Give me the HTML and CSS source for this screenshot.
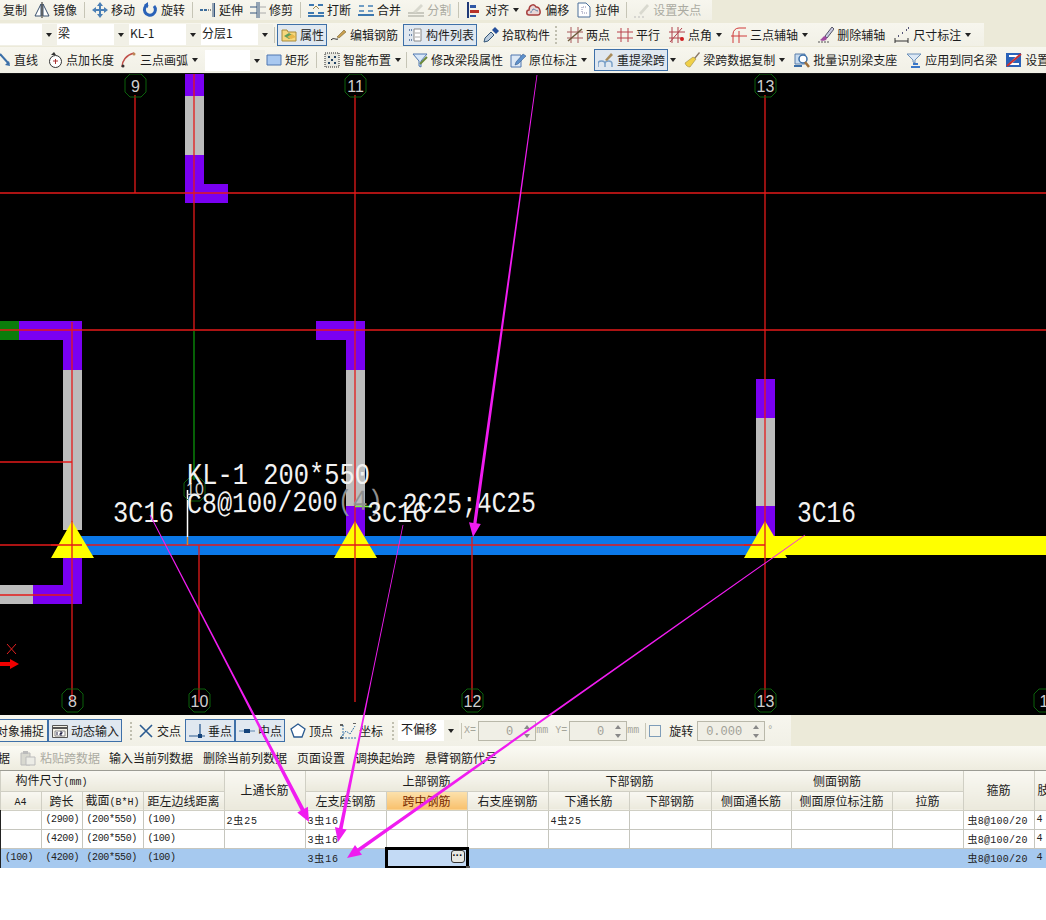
FILE: index.html
```html
<!DOCTYPE html>
<html lang="zh">
<head>
<meta charset="utf-8">
<title>梁 KL-1</title>
<link rel="stylesheet" href="styles.css">
</head>
<body>
<svg class="defs" aria-hidden="true">
<symbol id="mirror" viewBox="0 0 16 16"><path d="M7 2 1 14h6zM9 2l6 12H9z" fill="#fff" stroke="#39506e"/><path d="M8 0v16" stroke="#222"/></symbol>
<symbol id="move" viewBox="0 0 16 16"><path d="M8 0 5 4h2v3H4V5L0 8l4 3V9h3v3H5l3 4 3-4H9V9h3v2l4-3-4-3v2H9V4h2z" fill="#4a7fb5"/></symbol>
<symbol id="rotate" viewBox="0 0 16 16"><path d="M12 4a5.500 5.500 0 1 1-6-1.500" fill="none" stroke="#2a62b8" stroke-width="3"/><path d="M6 0v6l-4-3z" fill="#2a62b8"/></symbol>
<symbol id="extend" viewBox="0 0 16 16"><path d="M13 1v14M14.500 1v14" stroke="#35557d"/><path d="M0 8h3M4 8h3" stroke="#3d6d9c" stroke-width="2"/><path d="M8 8h4" stroke="#888" stroke-dasharray="1 1" stroke-width="2"/></symbol>
<symbol id="trim" viewBox="0 0 16 16"><path d="M7 0v16M9 0v16" stroke="#35557d"/><path d="M0 5h7M0 11h7" stroke="#35557d"/><path d="M10 5h6M10 11h6" stroke="#aaa"/></symbol>
<symbol id="break" viewBox="0 0 16 16"><path d="M0 11h6M10 11h6M0 14h16" stroke="#3d78b0" stroke-width="2"/><path d="M1 3h5M10 3h5" stroke="#3d78b0" stroke-width="2"/><path d="M5 7 8 4l3 3" stroke="#a08a50" fill="none"/></symbol>
<symbol id="merge" viewBox="0 0 16 16"><path d="M0 13h16" stroke="#3d78b0" stroke-width="2"/><path d="M1 4h5M10 4h5M1 9h5M10 9h5" stroke="#6f9cc4" stroke-width="2"/></symbol>
<symbol id="split" viewBox="0 0 16 16"><path d="M0 14h16M0 11h16" stroke="#c9c9bf" stroke-width="2"/><path d="m5 10 8-8 2 2-7 7z" fill="#d8d8ce"/></symbol>
<symbol id="align" viewBox="0 0 16 16"><path d="M2 0v16" stroke="#203a78" stroke-width="2"/><path d="M4 3h6v3H4z" fill="#2f57a5"/><path d="M4 8h9v3H4z" fill="#b8322a"/><path d="M4 13h6v2H4z" fill="#2f57a5"/></symbol>
<symbol id="offset" viewBox="0 0 16 16"><path d="M3 13C0 13 0 8 3 8 3 3 8 1 10 5c4-1 6 8 2 8z" fill="#e8d8d8" stroke="#a8403f" stroke-width="1.500"/><path d="M5 11c-1-2 2-2 2-4 2 0 3 2 5 2" stroke="#5a7fa8" fill="none"/></symbol>
<symbol id="stretch" viewBox="0 0 16 16"><path d="M2 1h8l4 4v10H2z" fill="#fff" stroke="#4a6f99"/><path d="M10 5h-4v6h5" stroke="#88a" stroke-dasharray="1 1" fill="none"/></symbol>
<symbol id="grip" viewBox="0 0 16 16"><path d="m5 11 8-9 2 2-8 9z" fill="#d9d9cf"/><path d="M0 15h2M4 15h2M8 15h2" stroke="#bbb"/></symbol>
<symbol id="prop" viewBox="0 0 16 16"><path d="M1 3h5l1 2h8v9H1z" fill="#f5d77e" stroke="#a88a3a"/><path d="m3 9 5-3 5 3-5 3z" fill="#5f9e5a"/><path d="m6 10 5-3 4 3-5 2z" fill="#e8b84a"/></symbol>
<symbol id="edit" viewBox="0 0 16 16"><path d="M0 13c3-3 4 0 7-1" stroke="#222" fill="none"/><path d="m6 10 7-7 2 2-7 6z" fill="#c8a050" stroke="#6b5320" stroke-width=".5"/></symbol>
<symbol id="list" viewBox="0 0 16 16"><path d="M2 3h3M2 8h3M2 13h3" stroke="#6b86ad" stroke-width="2" stroke-dasharray="1 1"/><path d="M7 2h7v12H7z" fill="#fff" stroke="#888"/><path d="M8 6h5M8 10h5" stroke="#aaa"/></symbol>
<symbol id="pick" viewBox="0 0 16 16"><path d="M1 15 2 11l6-6 3 3-6 6z" fill="#bcd" stroke="#357"/><path d="m9 3 3-3 4 4-3 3z" fill="#26509c"/></symbol>
<symbol id="twopt" viewBox="0 0 16 16"><path d="M4 0v16M11 0v16M0 5h16M0 11h16" stroke="#a8595a"/><path d="M1 14 15 2" stroke="#6c5a3c" stroke-width="1.500"/></symbol>
<symbol id="par" viewBox="0 0 16 16"><path d="M4 1v14M11 1v14M0 5h16M0 11h16" stroke="#b8404a"/></symbol>
<symbol id="angle" viewBox="0 0 16 16"><path d="M3 0v16M9 0v16M0 5h16M0 11h14M1 15 13 1" stroke="#b0404a"/><circle cx="13" cy="12" r="2" fill="#d02020"/></symbol>
<symbol id="arc3" viewBox="0 0 16 16"><path d="M2 16V7a6 6 0 0 1 6-6h7M0 9h16M8 4v12" stroke="#d03a3a" fill="none"/></symbol>
<symbol id="del" viewBox="0 0 16 16"><path d="m7 9 7-9 2 2-7 9z" fill="#c9c9e0" stroke="#556"/><path d="M2 13c2-1 3-4 5-4l2 2c0 2-3 4-7 2z" fill="#a04aa0"/><path d="M0 15h11" stroke="#555" stroke-dasharray="2 1"/></symbol>
<symbol id="dim" viewBox="0 0 16 16"><path d="M1 11v5M14 11v5M1 14h13" stroke="#333"/><path d="M4 9h1M8 6h1M12 3h1M14 1h1" stroke="#557" stroke-width="2"/></symbol>
<symbol id="line" viewBox="0 0 16 16"><path d="m5 2 9 10" stroke="#3b6fa8" stroke-width="2"/><path d="m15 14-5-1 4-4z" fill="#3b6fa8"/></symbol>
<symbol id="plus" viewBox="0 0 16 16"><circle cx="8.500" cy="9.500" r="6" fill="#fff" stroke="#333"/><path d="M6 9h5M8.500 7v5" stroke="#a33"/><path d="m4 3 3-3 2 3z" fill="#333"/></symbol>
<symbol id="arc" viewBox="0 0 16 16"><path d="M1 15C1 9 5 3 13 1" stroke="#c0504a" stroke-width="1.500" fill="none"/><circle cx="2" cy="14" r="1.500" fill="#333"/><circle cx="13" cy="2" r="1.500" fill="#b85"/></symbol>
<symbol id="rect" viewBox="0 0 16 16"><path d="M1 3h14v10H1z" fill="#a8c8f0" stroke="#4f77b0"/></symbol>
<symbol id="smart" viewBox="0 0 16 16"><path d="M1 1h14v14H1z" fill="#e8e8e0" stroke="#222" stroke-dasharray="1 1"/><path d="M4 4h2v2H4zM10 4h2v2h-2zM7 7h2v2H7zM4 10h2v2H4zM10 10h2v2h-2z" fill="#246"/></symbol>
<symbol id="funnel" viewBox="0 0 16 16"><path d="M1 2h14L9 9v6l-2-1V9z" fill="#d8e8f8" stroke="#4f77b0"/><path d="m8 12 7-7" stroke="#6b8a3a" stroke-width="2"/></symbol>
<symbol id="orig" viewBox="0 0 16 16"><path d="M1 3h10v12H1z" fill="#dce8f5" stroke="#4f77b0"/><path d="m6 10 7-8 3 2-8 8-3 1z" fill="#5f92cc" stroke="#2a4f80" stroke-width=".5"/></symbol>
<symbol id="refetch" viewBox="0 0 16 16"><path d="M0 15v-3c0-4 7-4 7 0v3M7 15v-3c0-4 7-4 7 0v3" stroke="#7aa0c8" fill="none" stroke-width="1.500"/><path d="m7 8 6-7 2 2-6 6z" fill="#a98c5a"/></symbol>
<symbol id="brush" viewBox="0 0 16 16"><path d="M10 6 15 0l1 1-5 6z" fill="#876"/><path d="M9 5 1 11c1 3 3 4 5 4l6-8z" fill="#f0d048" stroke="#8a7a3a" stroke-width=".5"/></symbol>
<symbol id="batch" viewBox="0 0 16 16"><path d="M1 2h10v10H1z" fill="#c8dcf0" stroke="#5b7faa"/><circle cx="9" cy="7" r="4" fill="#fff" stroke="#3b6fa8" stroke-width="1.500"/><path d="m11 10 4 5" stroke="#a0703a" stroke-width="2.500"/><path d="M0 14h8" stroke="#3b6fa8" stroke-width="2"/></symbol>
<symbol id="apply" viewBox="0 0 16 16"><path d="M1 2h14L9 8v3L7 10V8z" fill="#dce8f5" stroke="#6a8fb8"/><path d="M7 11h5v2h-5zM5 14h9v2H5z" fill="#3a77c8"/></symbol>
<symbol id="setz" viewBox="0 0 16 16"><path d="M0 1h15v14H0z" fill="#2a62b8"/><path d="M3 4h9L4 12h9" stroke="#fff" fill="none" stroke-width="2"/><path d="m1 14 14-12" stroke="#c83030" stroke-width="2"/></symbol>
<symbol id="dyn" viewBox="0 0 16 16"><path d="M.500 2.500h15v12H.500z" fill="#f4f2e8" stroke="#555"/><path d="M1 5h14" stroke="#555" stroke-width="2"/><path d="M3 8h10v5H3z" fill="#fff" stroke="#888"/><path d="M5 9v3M8 9h2v1.500H8V12h2" stroke="#224" fill="none"/></symbol>
<symbol id="cross" viewBox="0 0 16 16"><path d="m2 2 12 12M14 2 2 14" stroke="#2a5a90" stroke-width="1.600"/></symbol>
<symbol id="perp" viewBox="0 0 16 16"><path d="M0 13h16" stroke="#2a5a90"/><path d="M11 1v12" stroke="#2a5a90" stroke-width="1.300"/><path d="M9 11h4v4H9z" fill="#14437a"/></symbol>
<symbol id="mid" viewBox="0 0 16 16"><path d="M0 8h16" stroke="#5a86b0"/><path d="M5 6h6v4H5z" fill="#14437a"/></symbol>
<symbol id="top" viewBox="0 0 16 16"><path d="m8 1 7 5-3 8H4L1 6z" fill="#fff" stroke="#2a5a90" stroke-width="1.300"/></symbol>
<symbol id="coord" viewBox="0 0 16 16"><path d="M1 14 6 8l4 3 5-8M3 2v13h13" stroke="#3a76ac" stroke-dasharray="2 1" fill="none"/><path d="M0 2h3M13 0h3M0 15h3" stroke="#333" stroke-width="1.500"/></symbol>
<symbol id="paste" viewBox="0 0 16 16"><path d="M1 3h9v12H1z" fill="#d8d8d0" stroke="#bbb"/><path d="M6 7h9v8H6z" fill="#ecece6" stroke="#bbb"/><path d="M3 1h5v3H3z" fill="#bbb"/></symbol>
</svg>

<div class="row r1"><div class="bar">
<span class="it">复制</span>
<span class="it"><svg class="ic"><use href="#mirror"/></svg>镜像</span><i class="sep"></i>
<span class="it"><svg class="ic"><use href="#move"/></svg>移动</span>
<span class="it"><svg class="ic"><use href="#rotate"/></svg>旋转</span><i class="sep"></i>
<span class="it"><svg class="ic"><use href="#extend"/></svg>延伸</span>
<span class="it"><svg class="ic"><use href="#trim"/></svg>修剪</span><i class="sep"></i>
<span class="it"><svg class="ic"><use href="#break"/></svg>打断</span>
<span class="it"><svg class="ic"><use href="#merge"/></svg>合并</span>
<span class="it off"><svg class="ic"><use href="#split"/></svg>分割</span><i class="sep"></i>
<span class="it"><svg class="ic"><use href="#align"/></svg>对齐<b class="dr"></b></span>
<span class="it"><svg class="ic"><use href="#offset"/></svg>偏移</span>
<span class="it"><svg class="ic"><use href="#stretch"/></svg>拉伸</span><i class="sep"></i>
<span class="it off"><svg class="ic"><use href="#grip"/></svg>设置夹点</span>
</div></div>

<div class="row r2"><div class="bar">
<span class="combo"><span class="val"></span><span class="arr"></span></span>
<span class="combo"><span class="val">梁</span><span class="arr"></span></span>
<span class="combo"><span class="val">KL-1</span><span class="arr"></span></span>
<span class="combo"><span class="val">分层1</span><span class="arr"></span></span>
<i class="sep s2"></i>
<span class="it btn"><svg class="ic"><use href="#prop"/></svg>属性</span>
<span class="it m5"><svg class="ic"><use href="#edit"/></svg>编辑钢筋</span>
<span class="it btn m6"><svg class="ic"><use href="#list"/></svg>构件列表</span>
<span class="it m5"><svg class="ic"><use href="#pick"/></svg>拾取构件</span>
<i class="grip"></i>
<span class="it"><svg class="ic"><use href="#twopt"/></svg>两点</span>
<span class="it m9"><svg class="ic"><use href="#par"/></svg>平行</span>
<span class="it m9"><svg class="ic"><use href="#angle"/></svg>点角<b class="dr"></b></span>
<span class="it m10"><svg class="ic"><use href="#arc3"/></svg>三点辅轴<b class="dr"></b></span>
<span class="it m9"><svg class="ic"><use href="#del"/></svg>删除辅轴</span>
<span class="it"><svg class="ic"><use href="#dim"/></svg>尺寸标注<b class="dr"></b></span>
</div></div>

<div class="row r3"><div class="bar">
<span class="it clip m9"><svg class="ic"><use href="#line"/></svg>直线</span>
<span class="it"><svg class="ic"><use href="#plus"/></svg>点加长度</span>
<span class="it"><svg class="ic"><use href="#arc"/></svg>三点画弧<b class="dr"></b></span>
<span class="combo small"><span class="val"></span><span class="arr"></span></span>
<span class="it"><svg class="ic"><use href="#rect"/></svg>矩形</span><i class="sep"></i>
<span class="it m5"><svg class="ic"><use href="#smart"/></svg>智能布置<b class="dr"></b></span><i class="sep m5r"></i>
<span class="it"><svg class="ic"><use href="#funnel"/></svg>修改梁段属性</span>
<span class="it"><svg class="ic"><use href="#orig"/></svg>原位标注<b class="dr"></b></span>
<span class="it btn wide m2"><svg class="ic"><use href="#refetch"/></svg>重提梁跨</span><b class="dr lone"></b>
<span class="it m9"><svg class="ic"><use href="#brush"/></svg>梁跨数据复制<b class="dr"></b></span>
<span class="it m9"><svg class="ic"><use href="#batch"/></svg>批量识别梁支座</span>
<span class="it m9"><svg class="ic"><use href="#apply"/></svg>应用到同名梁</span>
<span class="it"><svg class="ic"><use href="#setz"/></svg>设置</span>
</div></div>

<svg class="canvas" viewBox="0 74 1046 641">
  <g class="purple">
    <rect x="185" y="74" width="19" height="22"/><rect x="185" y="155" width="19" height="48"/><rect x="204" y="184" width="24" height="19"/>
    <rect x="19" y="321" width="63" height="19"/><rect x="63" y="340" width="19" height="30"/>
    <rect x="63" y="555" width="19" height="49"/><rect x="33" y="585" width="30" height="19"/>
    <rect x="316" y="321" width="49" height="19"/><rect x="346" y="340" width="19" height="30"/><rect x="346" y="506" width="19" height="34"/>
    <rect x="756" y="379" width="19" height="39"/><rect x="756" y="506" width="19" height="34"/>
  </g>
  <g class="gray">
    <rect x="185" y="96" width="19" height="59"/><rect x="63" y="370" width="19" height="160"/><rect x="0" y="585" width="33" height="19"/>
    <rect x="346" y="370" width="19" height="136"/><rect x="756" y="418" width="19" height="88"/>
  </g>
  <rect class="green" x="0" y="321" width="19" height="19"/>
  <rect class="blue" x="72" y="536" width="690" height="19"/>
  <rect class="yellow" x="770" y="536" width="276" height="19"/>
  <g class="red">
    <path d="M0 193H1046M0 330H1046M0 545H765M0 462H72M0 595H72"/>
    <path d="M135 95V193M194 74V330M355 95V702M765 95V702M72 322V702M199 545V702M472 537V702"/>
  </g>
  <path class="gline" d="M194 331V480"/>
  <path class="wline" d="M187.500 490V537"/>
  <path class="oline" d="M187.500 537V545" />
  <path class="yellow" d="M72 521 51 558H94zM355 521 334 558H377zM765 521 744 558H787z"/>
  <path class="red" d="M355 521V558M765 521V558M72 521V558M51 545H82M334 545H377M744 545H765"/>
  <path class="lime" d="M355 506.500H372"/>
  <g class="axes">
    <path id="ax" d="M130 74h11l5 5v13l-5 5h-11l-5-5V79z"/>
    <use href="#ax" x="220"/><use href="#ax" x="630"/>
    <use href="#ax" x="-63" y="615"/><use href="#ax" x="64" y="615"/><use href="#ax" x="337" y="615"/><use href="#ax" x="630" y="615"/><use href="#ax" x="909" y="615"/>
    <use href="#ax" x="59" y="404"/>
  </g>
  <g class="axlbl">
    <text x="135.500" y="92">9</text><text x="355.500" y="92">11</text><text x="765.500" y="92">13</text>
    <text x="72.500" y="707">8</text><text x="199.500" y="707">10</text><text x="472.500" y="707">12</text><text x="765.500" y="707">13</text><text x="1044" y="707">1</text>
    <text x="195" y="495">10</text>
  </g>
  <text class="anno" x="187" y="484" textLength="183" lengthAdjust="spacingAndGlyphs">KL-1 200*550</text>
  <text class="anno" x="187" y="513" textLength="196" lengthAdjust="spacingAndGlyphs" transform="rotate(-1 187 513)">C8@100/200<tspan class="dim">(4)</tspan></text>
  <text class="anno" x="113" y="522" textLength="61" lengthAdjust="spacingAndGlyphs">3C16</text>
  <text class="anno" x="367" y="522" textLength="60" lengthAdjust="spacingAndGlyphs">3C16</text>
  <text class="anno" x="403" y="513" textLength="133" lengthAdjust="spacingAndGlyphs" transform="rotate(-0.600 403 513)">2C25;4C25</text>
  <text class="anno" x="797" y="522" textLength="59" lengthAdjust="spacingAndGlyphs">3C16</text>
  <path class="redx" d="M7 644 16 654M16 644 7 654"/>
  <path class="redfill" d="M0 662h10v-3l9 5-9 5v-3H0z"/>
</svg>

<div class="row snap"><div class="bar">
<span class="it btn lead">对象捕捉</span>
<span class="it btn join m4"><svg class="ic"><use href="#dyn"/></svg>动态输入</span>
<i class="grip g1"></i>
<span class="it m4"><svg class="ic"><use href="#cross"/></svg>交点</span>
<span class="it btn m0"><svg class="ic"><use href="#perp"/></svg>垂点</span>
<span class="it btn m5"><svg class="ic"><use href="#mid"/></svg>中点</span>
<span class="it"><svg class="ic"><use href="#top"/></svg>顶点</span>
<span class="it"><svg class="ic"><use href="#coord"/></svg>坐标</span>
<i class="grip g2"></i>
<span class="combo shift"><span class="val">不偏移</span><span class="arr"></span></span>
<i class="sep s3"></i>
<span class="lbl">X=</span><span class="num w58">0<i class="spin"></i></span><span class="lbl">mm</span>
<span class="lbl y">Y=</span><span class="num w58">0<i class="spin"></i></span><span class="lbl">mm</span>
<i class="sep s4"></i><i class="check"></i>
<span class="rot">旋转</span><span class="num w68">0.000<i class="spin"></i></span><span class="lbl deg">°</span>
</div></div>

<div class="row cmds">
<span class="cmd lead2">据</span>
<span class="cmd off tight"><svg class="ic"><use href="#paste"/></svg>粘贴跨数据</span>
<span class="cmd">输入当前列数据</span>
<span class="cmd">删除当前列数据</span>
<span class="cmd">页面设置</span>
<span class="cmd">调换起始跨</span>
<span class="cmd">悬臂钢筋代号</span>
</div>

<div class="tablewrap">
<table class="grid">
<colgroup>
<col class="c41"><col class="c41"><col class="c61"><col class="c81"><col class="c81"><col class="c81"><col class="c81"><col class="c81"><col class="c81"><col class="c82"><col class="c80"><col class="c101"><col class="c71"><col class="c71"><col class="c41">
</colgroup>
<thead>
<tr class="h1"><th colspan="4" class="lt">构件尺寸<small>(mm)</small></th><th rowspan="2">上通长筋</th><th colspan="3">上部钢筋</th><th colspan="2">下部钢筋</th><th colspan="3">侧面钢筋</th><th rowspan="2">箍筋</th><th rowspan="2" class="lt2">肢数</th></tr>
<tr class="h2"><th><small>A4</small></th><th>跨长</th><th>截面<small>(B*H)</small></th><th>距左边线距离</th><th>左支座钢筋</th><th class="hot">跨中钢筋</th><th>右支座钢筋</th><th>下通长筋</th><th>下部钢筋</th><th>侧面通长筋</th><th>侧面原位标注筋</th><th>拉筋</th></tr>
</thead>
<tbody>
<tr><td></td><td>(2900)</td><td>(200*550)</td><td>(100)</td><td class="rb">2虫25</td><td class="rb">3虫16</td><td></td><td></td><td class="rb">4虫25</td><td></td><td></td><td></td><td></td><td class="st">虫8@100/20</td><td class="rb">4</td></tr>
<tr><td></td><td>(4200)</td><td>(200*550)</td><td>(100)</td><td></td><td class="rb">3虫16</td><td></td><td></td><td></td><td></td><td></td><td></td><td></td><td class="st">虫8@100/20</td><td class="rb">4</td></tr>
<tr class="sel"><td>(100)</td><td>(4200)</td><td>(200*550)</td><td>(100)</td><td></td><td class="rb">3虫16</td><td class="cur"><span class="more">···</span><i class="handle"></i></td><td></td><td></td><td></td><td></td><td></td><td></td><td class="st">虫8@100/20</td><td class="rb">4</td></tr>
</tbody>
</table>
</div>

<svg class="overlay" viewBox="0 0 1046 920" aria-hidden="true">
  <polygon points="150.400,514.800 236.400,679.800 304.400,808.700 307.900,806.800 309,822 297.300,812.400 300.800,810.500 234.600,680.200 149.600,515.200"/>
  <polygon points="403.400,525.100 371.700,680.100 342.600,828.700 346.700,829.500 338,842 334.900,827.100 339,827.900 370.700,679.900 402.600,524.900"/>
  <polygon points="805.200,535.300 560.500,708.500 359.500,851.400 362,854.800 347,858 355,845 357.500,848.400 559.500,707 804.800,534.700"/>
  <polygon points="537.400,75 476.500,523.300 480.800,523.900 473,537 469,522.300 473.300,522.900 536.600,75"/>
</svg>
</body>
</html>
```
FILE: styles.css
```css
* { box-sizing: border-box; }
html, body { margin: 0; padding: 0; background: #fff; }
body {
  position: relative;
  width: 1046px;
  height: 920px;
  overflow: hidden;
  font: 12px/1 "Noto Sans CJK SC", "Liberation Sans", sans-serif;
  color: #1c1c1c;
}
.defs { position: absolute; width: 0; height: 0; }
.ic { width: 16px; height: 16px; flex: none; }

.row { display: flex; background: #ecead9; overflow: hidden; }
.bar {
  display: flex;
  align-items: center;
  background: linear-gradient(#f7f6ee, #f1f0e6);
  white-space: nowrap;
  flex: none;
}
.r1 { height: 22px; }
.r1 .bar { height: 20px; padding: 0 4px 0 3px; }
.r2 { height: 25px; padding-top: 1px; }
.r2 .bar { height: 23px; padding-right: 6px; margin-left: -15px; }
.r3 { height: 27px; border-bottom: 1px solid #111; }
.r3 .bar { height: 26px; width: 1046px; }

.it { display: flex; align-items: center; gap: 3px; margin-right: 7px; flex: none; }
.off { color: #ababa2; }
.sep { width: 1px; height: 16px; background: #c6c5b6; margin: 0 7px 0 0; flex: none; }
.s2 { margin: 0 2px 0 1px; }
.m0 { margin-right: 0; }
.m2 { margin-right: 2px; }
.m4 { margin-right: 4px; }
.m5 { margin-right: 5px; }
.m6 { margin-right: 6px; }
.m9 { margin-right: 9px; }
.m10 { margin-right: 10px; }
.m5r { margin-right: 5px; }
.grip { width: 2px; height: 18px; margin: 0 10px 0 0; flex: none; border-left: 2px dotted #c0bfb0; }
.dr {
  display: block;
  width: 0; height: 0;
  margin-left: 1px;
  border: 3px solid transparent;
  border-top: 4px solid #222;
  border-bottom: 0;
  flex: none;
}
.dr.lone { margin: 0 8px 0 0; }
.btn {
  height: 22px;
  padding: 0 2px 0 3px;
  border: 1px solid #3e70a8;
  background: #e0e8f0;
  margin-right: 4px;
}
.btn.m0 { margin-right: 0; }
.btn.m2 { margin-right: 2px; }
.btn.m4 { margin-right: 4px; }
.btn.m5 { margin-right: 5px; }
.btn.m6 { margin-right: 6px; }
.clip { margin-left: -5px; }

.combo { display: flex; width: 72px; height: 21px; flex: none; }
.combo .val { flex: 1; background: #fff; padding: 3px 0 0 1px; }
.combo .arr { position: relative; width: 15px; background: #f1f0e6; }
.combo .arr::after {
  content: "";
  position: absolute;
  left: 4px; top: 9px;
  border: 3px solid transparent;
  border-top: 4px solid #222;
  border-bottom: 0;
}
.combo.small { width: 60px; margin-right: 1px; }
.combo.shift { width: 61px; margin-right: 2px; }
.combo.shift .val { padding-left: 3px; }

.canvas { display: block; width: 1046px; height: 641px; background: #000; }
.purple rect { fill: #7a00f2; }
.gray rect { fill: #bcbcbc; }
.green { fill: #0b7d0b; }
.blue { fill: #0b78e8; }
.yellow { fill: #ffff00; }
.red { fill: none; stroke: #e41a1a; stroke-width: 1.300; }
.gline { stroke: #0a8a0a; fill: none; stroke-width: 1.400; }
.wline { stroke: #fff; fill: none; stroke-width: 1.500; }
.oline { stroke: #e08020; fill: none; stroke-width: 1.500; }
.lime { stroke: #80f040; fill: none; stroke-width: 1.500; }
.axes { fill: none; stroke: #0c6c0c; stroke-width: .9; }
.axlbl text { font: 16px "Liberation Sans", sans-serif; fill: #cfcfcf; text-anchor: middle; }
.anno { font: 29px "Liberation Mono", monospace; fill: #f2f2f2; }
.anno .dim { fill: #8f8f8f; }
.redx { stroke: #e02020; fill: none; }
.redfill { fill: #f00000; }

.snap { height: 31px; align-items: stretch; }
.snap .bar { padding-right: 16px; }
.snap .btn { height: 23px; }
.btn.lead { margin: 0 0 0 -4px; padding: 0 3px 0 0; border-left: 0; background: transparent; }
.join { border-left-width: 1px; }
.grip.g1 { margin: 0 6px 0 4px; }
.grip.g2 { margin: 0 4px 0 2px; }
.s3 { margin: 0 2px 0 0; }
.s4 { margin: 0 3px 0 4px; }
.lbl { font: 10px "Liberation Mono", monospace; color: #a5a59a; margin-right: 2px; flex: none; }
.lbl.y { margin-left: 5px; }
.lbl.deg { margin-left: 2px; }
.num {
  position: relative;
  height: 20px;
  border: 1px solid #b9b8aa;
  background: #f0efe6;
  color: #a0a096;
  font: 12px "Liberation Mono", monospace;
  text-align: right;
  padding: 3px 22px 0 0;
  flex: none;
}
.w58 { width: 58px; }
.w68 { width: 68px; }
.spin {
  position: absolute;
  right: 5px; top: 3px;
  border-left: 3px solid transparent;
  border-right: 3px solid transparent;
  border-bottom: 4px solid #888;
}
.spin::after {
  content: "";
  position: absolute;
  left: -3px; top: 9px;
  border-left: 3px solid transparent;
  border-right: 3px solid transparent;
  border-top: 4px solid #888;
}
.check { width: 12px; height: 12px; border: 1px solid #7f9db9; background: #f5f4ec; margin: 0 8px 0 0; flex: none; }
.rot { margin-right: 4px; flex: none; }

.cmds {
  height: 25px;
  align-items: center;
  background: linear-gradient(#fbfaf4, #eeecdf);
  border-bottom: 1px solid #9c9c94;
  white-space: nowrap;
}
.cmd { display: flex; align-items: center; gap: 4px; margin-right: 10px; flex: none; }
.cmd.tight { margin-right: 9px; }
.cmd.lead2 { margin-left: -2px; margin-right: 10px; }

.tablewrap { height: 97px; overflow: hidden; background: #fff; }
.grid { border-collapse: collapse; table-layout: fixed; width: 1075px; margin-left: -1px; }
.c41 { width: 41px; } .c61 { width: 61px; } .c81 { width: 81px; } .c82 { width: 82px; }
.c80 { width: 80px; } .c101 { width: 101px; } .c71 { width: 71px; }
.grid th {
  font-weight: 400;
  background: linear-gradient(#f9f8f2, #ebe9dc);
  border: 1px solid #d0cfc4;
  border-top: 0;
  padding: 0;
  text-align: center;
  overflow: hidden;
  white-space: nowrap;
}
.grid th.lt { text-align: left; padding-left: 15px; }
.grid th.lt2 { text-align: left; padding-left: 3px; }
.grid small { font: 10px "Liberation Mono", monospace; }
.h1 { height: 20px; }
.h2 { height: 19px; }
.grid th.hot { background: linear-gradient(#fce2ae, #f8c06c); color: #7a2a00; }
.grid td {
  height: 19px;
  padding: 0 0 0 4px;
  border: 1px solid #c6c6be;
  font: 10px "Liberation Mono", "Noto Sans CJK SC", monospace;
  letter-spacing: -.4px;
  white-space: nowrap;
  overflow: hidden;
  color: #222;
}
.grid td.rb { padding-left: 2px; letter-spacing: .8px; }
.grid td.st { letter-spacing: .25px; padding-left: 4px; }
.grid tbody td:first-child { border-left: 2px solid #222; }
.sel td { background: #a6c9ef; border-color: #a6c9ef; }
.sel td.st, .sel td:last-child { border-left-color: #c6c6be; }
.grid td.cur {
  position: relative;
  background: #c3daf5;
  border: 3px solid #000;
  overflow: visible;
}
.more {
  position: absolute;
  right: 1px; top: 0;
  width: 14px; height: 13px;
  background: #e8e8e2;
  border: 1px solid #333;
  border-radius: 3px;
  color: #000;
  font: bold 10px/9px "Liberation Sans", sans-serif;
  letter-spacing: 0;
  text-align: center;
}
.handle { position: absolute; right: -4px; bottom: -4px; width: 4px; height: 4px; background: #555; }

.overlay { position: absolute; left: 0; top: 0; width: 1046px; height: 920px; pointer-events: none; }
.overlay polygon { fill: #f01cf0; }
```
